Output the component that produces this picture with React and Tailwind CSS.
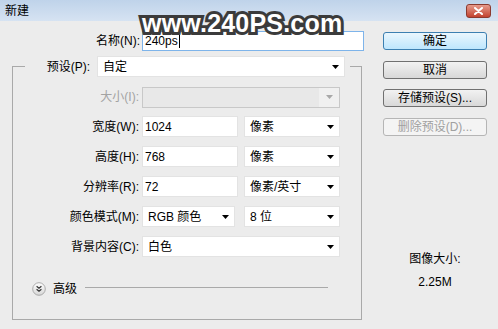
import { useState } from 'react';

const font = 'font-["Liberation_Sans","Noto_Sans_CJK_SC",sans-serif]';

function Caret({ disabled }) {
  return (
    <svg width="7" height="4" viewBox="0 0 7 4" className="shrink-0">
      <path d="M0 0h7L3.5 4z" fill={disabled ? '#a8a8a8' : '#000'} />
    </svg>
  );
}

function Select({ value, className = '' }) {
  return (
    <div
      className={`flex h-[21px] items-center justify-between border border-[#e3e3e3] bg-white pl-[5px] pr-[5px] ${className}`}
    >
      <span>{value}</span>
      <Caret />
    </div>
  );
}

function Field({ value, className = '' }) {
  return (
    <div className={`flex h-[21px] items-center border border-[#e3e3e3] bg-white px-[2px] ${className}`}>
      {value}
    </div>
  );
}

function Row({ label, children, muted }) {
  return (
    <div className="mt-[9px] flex h-[21px] items-center">
      <span className={`w-[126px] text-right ${muted ? 'text-[#a3a3a3]' : 'text-black'}`}>{label}</span>
      <div className="ml-[3px] flex items-center gap-[6px]">{children}</div>
    </div>
  );
}

function DialogButton({ children, primary, disabled }) {
  const tone = primary
    ? 'border-[#3c7fb1] bg-gradient-to-b from-[#eaf6fd] to-[#bee6fd] text-black'
    : disabled
      ? 'border-[#b5b5b5] bg-[#f4f4f4] text-[#a0a0a0]'
      : 'border-[#707070] bg-gradient-to-b from-[#f2f2f2] to-[#d8d8d8] text-black';
  return (
    <button
      type="button"
      className={`flex h-[18px] w-[104px] items-center justify-center rounded-[3px] border text-[12px] leading-none ${tone}`}
    >
      {children}
    </button>
  );
}

export default function App() {
  const [name] = useState('240ps');

  return (
    <div className={`relative h-[329px] w-[498px] overflow-hidden bg-[#ececec] text-[12px] leading-none text-black ${font}`}>
      <div className="flex h-[21px] items-center justify-between bg-gradient-to-b from-[#bfd3ea] to-[#d6e3f2] pl-[5px] pr-[7px]">
        <span>新建</span>
        <div className="flex h-[14px] w-[25px] items-center justify-center rounded-[3px] border border-[#8b3a2f] bg-gradient-to-b from-[#e59a8c] to-[#c2412e]">
          <svg width="9" height="8" viewBox="0 0 9 8">
            <path d="M1 1l7 6M8 1L1 7" stroke="#fff" strokeWidth="2" strokeLinecap="round" />
          </svg>
        </div>
      </div>

      <div className="flex pt-[10px]">
        <div className="w-[370px]">
          <div className="flex h-[20px] items-center">
            <span className="w-[140px] text-right">名称(N):</span>
            <div className="ml-[2px] flex h-[20px] w-[222px] items-center border border-[#7eb4ea] bg-white px-[2px]">
              {name}
              <span className="ml-px h-[13px] w-px bg-black" />
            </div>
          </div>

          <fieldset className="ml-[12px] mt-[5px] w-[350px] border border-[#a9a9a9] px-0 pb-[23px]">
            <legend className="ml-[12px] flex items-center pr-[5px]">
              <span className="w-[65px] text-right">预设(P):</span>
              <Select value="自定" className="ml-[7px] w-[248px]" />
            </legend>

            <div className="mt-[10px] flex h-[20px] items-center">
              <span className="w-[126px] text-right text-[#a3a3a3]">大小(I):</span>
              <div className="ml-[3px] flex h-[21px] w-[198px] items-center justify-end border border-[#c8c8c8] bg-[#e8e8e8]">
                <div className="flex h-full w-[20px] items-center justify-center bg-[#f0f0f0]">
                  <Caret disabled />
                </div>
              </div>
            </div>

            <Row label="宽度(W):">
              <Field value="1024" className="w-[96px]" />
              <Select value="像素" className="w-[96px]" />
            </Row>
            <Row label="高度(H):">
              <Field value="768" className="w-[96px]" />
              <Select value="像素" className="w-[96px]" />
            </Row>
            <Row label="分辨率(R):">
              <Field value="72" className="w-[96px]" />
              <Select value="像素/英寸" className="w-[96px]" />
            </Row>
            <Row label="颜色模式(M):">
              <Select value="RGB 颜色" className="mr-[3px] w-[93px]" />
              <Select value="8 位" className="w-[96px]" />
            </Row>
            <Row label="背景内容(C):">
              <Select value="白色" className="w-[198px]" />
            </Row>

            <div className="ml-[19px] mt-[25px] flex h-[14px] items-center">
              <svg width="14" height="14" viewBox="0 0 14 14">
                <defs>
                  <linearGradient id="adv" x1="0" y1="0" x2="0" y2="1">
                    <stop offset="0" stopColor="#ffffff" />
                    <stop offset="1" stopColor="#d6d6d6" />
                  </linearGradient>
                </defs>
                <circle cx="7" cy="7" r="6.3" fill="url(#adv)" stroke="#9a9a9a" strokeWidth="0.8" />
                <path d="M4.6 4.3L7 6.3l2.4-2M4.6 7.3L7 9.3l2.4-2" fill="none" stroke="#333" strokeWidth="1.2" />
              </svg>
              <span className="ml-[7px]">高级</span>
              <div className="ml-[8px] h-px w-[243px] -translate-y-[2px] bg-[#a9a9a9]" />
            </div>
          </fieldset>
        </div>

        <div className="ml-[13px] flex w-[104px] flex-col items-center pt-[1px]">
          <DialogButton primary>确定</DialogButton>
          <div className="mt-[11px]">
            <DialogButton>取消</DialogButton>
          </div>
          <div className="mt-[10px]">
            <DialogButton>存储预设(S)...</DialogButton>
          </div>
          <div className="mt-[11px]">
            <DialogButton disabled>删除预设(D)...</DialogButton>
          </div>
          <span className="mt-[117px]">图像大小:</span>
          <span className="mt-[11px]">2.25M</span>
        </div>
      </div>

      <div className="pointer-events-none absolute left-[142px] top-[11px] font-['Liberation_Sans',sans-serif] text-[25px] font-bold leading-none tracking-[0.2px] text-white [-webkit-text-stroke:6px_#3b3b3b] [paint-order:stroke_fill]">
        www.240PS.com
      </div>
    </div>
  );
}
